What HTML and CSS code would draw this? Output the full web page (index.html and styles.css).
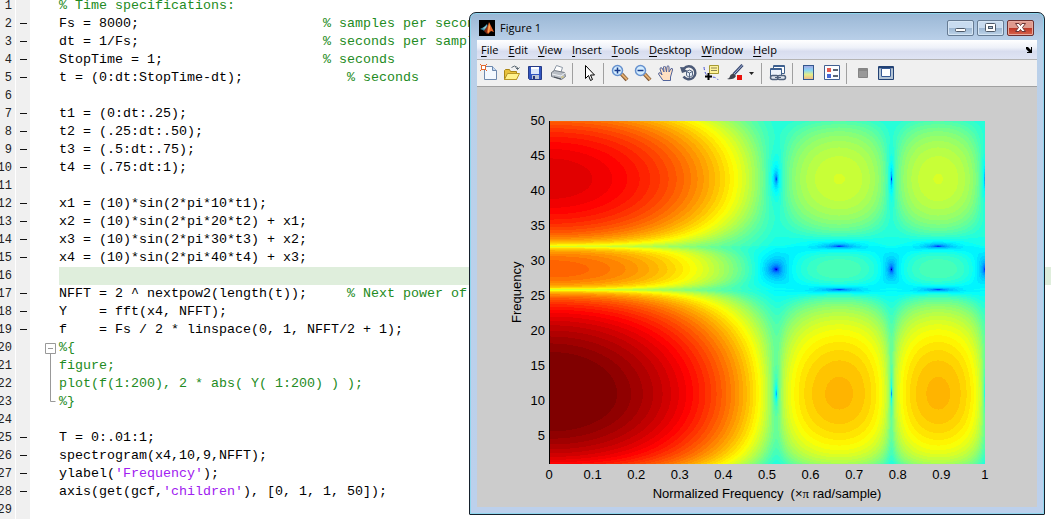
FILE: index.html
```html
<!DOCTYPE html>
<html lang="en">
<head>
<meta charset="utf-8">
<title>Figure 1</title>
<link rel="stylesheet" href="styles.css">
</head>
<body>
<main class="editor">
<div class="line"><span class="num">1</span><span class="mark"></span><span class="fold"></span><code class="comment">% Time specifications:</code></div>
<div class="line"><span class="num">2</span><span class="mark dash"></span><span class="fold"></span><code>Fs = 8000;                       <span class="comment">% samples per second</span></code></div>
<div class="line"><span class="num">3</span><span class="mark dash"></span><span class="fold"></span><code>dt = 1/Fs;                       <span class="comment">% seconds per sample</span></code></div>
<div class="line"><span class="num">4</span><span class="mark dash"></span><span class="fold"></span><code>StopTime = 1;                    <span class="comment">% seconds</span></code></div>
<div class="line"><span class="num">5</span><span class="mark dash"></span><span class="fold"></span><code>t = (0:dt:StopTime-dt);             <span class="comment">% seconds</span></code></div>
<div class="line"><span class="num">6</span><span class="mark"></span><span class="fold"></span><code></code></div>
<div class="line"><span class="num">7</span><span class="mark dash"></span><span class="fold"></span><code>t1 = (0:dt:.25);</code></div>
<div class="line"><span class="num">8</span><span class="mark dash"></span><span class="fold"></span><code>t2 = (.25:dt:.50);</code></div>
<div class="line"><span class="num">9</span><span class="mark dash"></span><span class="fold"></span><code>t3 = (.5:dt:.75);</code></div>
<div class="line"><span class="num">10</span><span class="mark dash"></span><span class="fold"></span><code>t4 = (.75:dt:1);</code></div>
<div class="line"><span class="num">11</span><span class="mark"></span><span class="fold"></span><code></code></div>
<div class="line"><span class="num">12</span><span class="mark dash"></span><span class="fold"></span><code>x1 = (10)*sin(2*pi*10*t1);</code></div>
<div class="line"><span class="num">13</span><span class="mark dash"></span><span class="fold"></span><code>x2 = (10)*sin(2*pi*20*t2) + x1;</code></div>
<div class="line"><span class="num">14</span><span class="mark dash"></span><span class="fold"></span><code>x3 = (10)*sin(2*pi*30*t3) + x2;</code></div>
<div class="line"><span class="num">15</span><span class="mark dash"></span><span class="fold"></span><code>x4 = (10)*sin(2*pi*40*t4) + x3;</code></div>
<div class="line"><span class="num">16</span><span class="mark"></span><span class="fold"></span><code class="current"></code></div>
<div class="line"><span class="num">17</span><span class="mark dash"></span><span class="fold"></span><code>NFFT = 2 ^ nextpow2(length(t));     <span class="comment">% Next power of 2</span></code></div>
<div class="line"><span class="num">18</span><span class="mark dash"></span><span class="fold"></span><code>Y    = fft(x4, NFFT);</code></div>
<div class="line"><span class="num">19</span><span class="mark dash"></span><span class="fold"></span><code>f    = Fs / 2 * linspace(0, 1, NFFT/2 + 1);</code></div>
<div class="line"><span class="num">20</span><span class="mark"></span><span class="fold"><svg width="29" height="18"><path d="M15.5 4.500h10v10h-10zM18 9.500h5M20.500 15v3" class="fold-stroke"/></svg></span><code class="comment">%{</code></div>
<div class="line"><span class="num">21</span><span class="mark"></span><span class="fold"><svg width="29" height="18"><path d="M20.500 0v18" class="fold-stroke"/></svg></span><code class="comment">figure;</code></div>
<div class="line"><span class="num">22</span><span class="mark"></span><span class="fold"><svg width="29" height="18"><path d="M20.500 0v18" class="fold-stroke"/></svg></span><code class="comment">plot(f(1:200), 2 * abs( Y( 1:200) ) );</code></div>
<div class="line"><span class="num">23</span><span class="mark"></span><span class="fold"><svg width="29" height="18"><path d="M20.500 0v8.500h5" class="fold-stroke"/></svg></span><code class="comment">%}</code></div>
<div class="line"><span class="num">24</span><span class="mark"></span><span class="fold"></span><code></code></div>
<div class="line"><span class="num">25</span><span class="mark dash"></span><span class="fold"></span><code>T = 0:.01:1;</code></div>
<div class="line"><span class="num">26</span><span class="mark dash"></span><span class="fold"></span><code>spectrogram(x4,10,9,NFFT);</code></div>
<div class="line"><span class="num">27</span><span class="mark dash"></span><span class="fold"></span><code>ylabel(<span class="string">'Frequency'</span>);</code></div>
<div class="line"><span class="num">28</span><span class="mark dash"></span><span class="fold"></span><code>axis(get(gcf,<span class="string">'children'</span>), [0, 1, 1, 50]);</code></div>
<div class="line"><span class="num">29</span><span class="mark"></span><span class="fold"></span><code></code></div>
</main>

<section class="window" aria-label="Figure 1">
<header class="titlebar">
<svg class="app-icon" width="16" height="16" viewBox="0 0 16 16"><path fill="#000" d="M0 0h16v16H0z"/><path fill="#3d8fae" d="M1 9l4-2 3-3 1 3-4 4-1-1z"/><path fill="#8fc7cf" d="M4 8l4-3-1 3-2 1z"/><path fill="#7d2a14" d="M5 11l4-6 1 7-2 2z"/><path fill="#e7662a" d="M10 2l2 4 3 6-3-1-3 3-1-2 1-6z"/><path fill="#ffb35a" d="M10 3l1 4-1 5-1 1z"/></svg>
<h1>Figure 1</h1>
<button class="caption" aria-label="Minimize"><svg width="25" height="14"><rect x="7.500" y="7.500" width="10" height="3" rx="1" fill="#fff" stroke="#4d5968"/></svg></button>
<button class="caption" aria-label="Maximize"><svg width="25" height="14"><rect x="7.500" y="2.500" width="10" height="8" rx="1" fill="#fff" stroke="#4d5968"/><rect x="10.500" y="5.500" width="4" height="2" fill="#a9bfd6" stroke="#4d5968"/></svg></button>
<button class="caption close" aria-label="Close"><svg width="25" height="14"><path d="M7.500 2.500h3.500l1.500 2 1.500-2h3.500l-3 4 3 4h-3.500l-1.500-2-1.500 2H7.500l3-4z" fill="#fff" stroke="#6b3434"/></svg></button>
</header>
<nav class="menubar">
<button><u>F</u>ile</button><button><u>E</u>dit</button><button><u>V</u>iew</button><button><u>I</u>nsert</button><button><u>T</u>ools</button><button><u>D</u>esktop</button><button><u>W</u>indow</button><button><u>H</u>elp</button>
<button class="dock" aria-label="Dock figure"><svg width="8" height="8"><path d="M1 1h2l3 3V1h1v6H2V6h2L1 3z" fill="#000"/></svg></button>
</nav>
<div class="toolbar">
<button aria-label="New figure"><svg width="18" height="18"><path d="M4.500 2.500h8l4 4v9h-12z" fill="#f4f9ff" stroke="#6d88ad"/><path d="M12.500 2.500v4h4" fill="#c5d9f2" stroke="#6d88ad"/><path d="M1.500 1.500h4v4h-4z" fill="#fff" stroke="#e2672c"/><path d="M0 0l2 2M7 0L5 2M0 7l2-2M7 7L5 5" stroke="#e2672c"/></svg></button>
<button aria-label="Open"><svg width="18" height="18"><path d="M1.500 15.500v-9l1-1h4l1 2h6v8z" fill="#e8c13b" stroke="#a98515"/><path d="M1.500 15.500l3-6h12l-3 6z" fill="#fff18b" stroke="#b79527"/><path d="M8.500 3.500q3-3 6 0v2M12.500 3.500l2 2 2-2" fill="none" stroke="#5d6a75"/></svg></button>
<button aria-label="Save"><svg width="18" height="18"><path d="M2.500 2.500h13v13h-12l-1-1z" fill="#3155c0" stroke="#263b86"/><path d="M5 3h8v7H5z" fill="#dce8fb"/><path d="M5 3h8v2H5z" fill="#fff"/><path d="M6 11h7v4H6z" fill="#bcc6d5"/><path d="M7 12h2v3H7z" fill="#26367a"/></svg></button>
<button aria-label="Print"><svg width="18" height="18"><path d="M4.500 7.500l3-6 6 2-2 6z" fill="#fff" stroke="#8b96a4"/><path d="M2.500 8.500l3-2 10 2 1 4-4 3-10-3z" fill="#b9bec5" stroke="#747b84"/><path d="M3 10l9 2 4-3" fill="none" stroke="#edf0f3"/><path d="M5 13l7 2" stroke="#454b53"/><path d="M12.500 13h2" stroke="#efd44f"/></svg></button>
<i class="sep"></i>
<button aria-label="Edit plot"><svg width="18" height="18"><path d="M5.500 1.500v13l3-3 2 5 2-1-2-4.500h4z" fill="#fff" stroke="#000"/></svg></button>
<i class="sep"></i>
<button aria-label="Zoom in"><svg width="18" height="18"><path d="M10.500 10l5.500 6" stroke="#805630" stroke-width="4"/><path d="M10.500 10l5.500 5.500" stroke="#e3ae70" stroke-width="2"/><circle cx="6.500" cy="6.500" r="5" fill="#d4edff" stroke="#6691ce" stroke-width="1.500"/><path d="M3.500 6.500h6M6.500 3.500v6" stroke="#173b8c" stroke-width="1.500"/></svg></button>
<button aria-label="Zoom out"><svg width="18" height="18"><path d="M10.500 10l5.500 6" stroke="#805630" stroke-width="4"/><path d="M10.500 10l5.500 5.500" stroke="#e3ae70" stroke-width="2"/><circle cx="6.500" cy="6.500" r="5" fill="#d4edff" stroke="#6691ce" stroke-width="1.500"/><path d="M3.500 6.500h6" stroke="#173b8c" stroke-width="1.500"/></svg></button>
<button aria-label="Pan"><svg width="18" height="18"><path d="M6 16.500L1.500 10q0-2 2-1L5 11 3 5q0-2 2-1l2 4-.5-5q1-2 2 0l1 5 .5-5.500q1-1.500 2 0V8l2-3.500q2-.5 1.500 1.500L13.500 13v3.500z" fill="#ffe0c2" stroke="#52649b"/></svg></button>
<button aria-label="Rotate 3D"><svg width="18" height="18"><path d="M4 4.500A6.500 6.500 0 1 1 3.500 12.500" fill="none" stroke="#4c5a77" stroke-width="2.500"/><path d="M0 3l2 6 6-2-3-1.500 1-2z" fill="#4c5a77"/><path d="M6.500 7.500l3-1.500 3 1.500v4l-3 2-3-2zM6.500 7.500l3 1.500 3-1.500M9.500 9v4.500" fill="#e5edf8" stroke="#566783"/></svg></button>
<button aria-label="Data cursor"><svg width="18" height="18"><path d="M1 3q1 10 7 10 6 0 7 3" fill="none" stroke="#4650d0" stroke-dasharray="3 2"/><path d="M6.500 1.500h9v8h-9z" fill="#fff29a" stroke="#a69a34"/><path d="M8 4h6M8 6.500h6" stroke="#8c8654"/><path d="M5.500 9v7M2 12.500h7" stroke="#000" stroke-width="2"/></svg></button>
<button aria-label="Brush"><svg width="18" height="18"><path d="M16.500 1L8 10" stroke="#35456d" stroke-width="3"/><path d="M16.500 1L8 10" stroke="#aebde0"/><path d="M1 15q3-1 3.500-4l3-2 2.500 3q-2 4-9 3z" fill="#424651"/><path d="M11 11h5v5h-5z" fill="#e9110b"/></svg></button>
<button class="arrow" aria-label="Brush options"><svg width="12" height="18"><path d="M3 8h5l-2.500 3z" fill="#222"/></svg></button>
<i class="sep"></i>
<button aria-label="Link plot"><svg width="18" height="18"><path d="M4.500 1.500h11v8h-11z" fill="#fff" stroke="#40618c"/><path d="M1.500 4.500h11v8h-11z" fill="#edf4fc" stroke="#40618c"/><path d="M2 5.500h10M5 2.500h10" stroke="#3d6195"/><rect x="1.500" y="11.500" width="8" height="4" rx="2" fill="#dfe6ef" stroke="#4f627c" stroke-width="1.500"/><rect x="8.500" y="11.500" width="8" height="4" rx="2" fill="#dfe6ef" stroke="#4f627c" stroke-width="1.500"/><path d="M6 13.500h6" stroke="#4f627c"/></svg></button>
<i class="sep"></i>
<button aria-label="Insert colorbar"><svg width="18" height="18"><defs><linearGradient id="bar" x1="0" y1="0" x2="0" y2="1"><stop stop-color="#a4a3e6"/><stop offset=".35" stop-color="#8ad8f3"/><stop offset=".65" stop-color="#e5ed87"/><stop offset="1" stop-color="#efb489"/></linearGradient></defs><rect x="3.500" y="1.500" width="10" height="14" fill="url(#bar)" stroke="#35588d"/></svg></button>
<button aria-label="Insert legend"><svg width="18" height="18"><path d="M1.500 1.500h15v14h-15z" fill="#fbfdff" stroke="#415f91"/><path d="M4 4h4v4H4z" fill="#e45b50"/><path d="M4 10h4v4H4z" fill="#4667d5"/><path d="M10 6h5M10 12h5" stroke="#26334a" stroke-width="1.500"/></svg></button>
<i class="sep"></i>
<button aria-label="Hide plot tools"><svg width="18" height="18"><path d="M4.500 4.500h9v9h-9z" fill="#999" stroke="#858585"/><path d="M5 6h8" stroke="#777"/></svg></button>
<button aria-label="Show plot tools"><svg width="18" height="18"><path d="M1.500 2.500h15v13h-15z" fill="#fff" stroke="#234274"/><path d="M2 3.500h14" stroke="#234274" stroke-width="2"/><path d="M2 5h2v8H2zM14 5h2v8h-2zM2 13h14v2H2z" fill="#b4c4d4"/><path d="M4.500 4.500h9v8h-9z" fill="#fff" stroke="#365a94"/></svg></button>
</div>
<div class="figure">
<div class="ylabel">Frequency</div>
<div class="yticks"><span>50</span><span>45</span><span>40</span><span>35</span><span>30</span><span>25</span><span>20</span><span>15</span><span>10</span><span>5</span></div>
<canvas class="plot" id="plot" width="435" height="343" role="img" aria-label="Spectrogram"></canvas>
<div class="xticks"><span>0</span><span>0.1</span><span>0.2</span><span>0.3</span><span>0.4</span><span>0.5</span><span>0.6</span><span>0.7</span><span>0.8</span><span>0.9</span><span>1</span></div>
<div class="xlabel">Normalized Frequency&nbsp; (×<span class="symbol">π</span> rad/sample)</div>
</div>
</section>
<script src="plot.js"></script>
</body>
</html>
```
FILE: styles.css
```css
* { box-sizing: border-box; }

body {
  margin: 0;
  min-height: 100vh;
  background: #fff;
  color: #000;
  position: relative;
  overflow: hidden;
}

button {
  margin: 0;
  padding: 0;
  border: 0;
  background: none;
  font: inherit;
  color: inherit;
}

svg { display: block; }

/* Code editor */
.editor {
  height: 100vh;
  overflow: hidden;
  font: 10pt/18px "Liberation Mono", monospace;
}

.line {
  display: grid;
  grid-template-columns: 16px 14px 29px 1fr;
  height: 18px;
}

.line:first-child { margin-top: -3px; }

.num {
  display: flex;
  justify-content: flex-end;
  padding-right: 3px;
  background: #f0f0f0;
  border-right: 1px solid #fff;
  font-size: 12px;
  color: #222;
}

.mark {
  display: flex;
  align-items: center;
  justify-content: center;
  padding-bottom: 2px;
  background: #f0f0f0;
}

.dash::before {
  content: "";
  width: 7px;
  height: 1px;
  background: #111;
}

.line code {
  font: inherit;
  white-space: pre;
}

.comment { color: #228b22; }
.string { color: #a020f0; }
.current { background: #dfeedc; }
.fold-stroke { fill: none; stroke: #999; }

/* Figure window */
.window {
  position: absolute;
  top: 12px;
  right: 6px;
  left: 469px;
  display: flex;
  flex-direction: column;
  padding: 0 7px 7px;
  border: 1px solid #16202c;
  border-radius: 7px 7px 1px 1px;
  background: linear-gradient(#9ab7d5, #bad0e9 28px, #bcd0ec);
  box-shadow: inset 0 0 0 1px #8fd6ee;
  font: 11px/18px "Open Sans", sans-serif;
}

.titlebar {
  display: flex;
  align-items: center;
  height: 27px;
  padding: 3px 3px 0 2px;
  gap: 3px;
}

.titlebar h1 {
  flex: 1;
  margin: 0;
  padding-left: 2px;
  font-size: 11px;
  font-weight: 400;
}

.caption {
  width: 27px;
  height: 16px;
  border: 1px solid #667b93;
  border-radius: 2px;
  background: linear-gradient(#c8dbef 50%, #9bb6d2 50%, #bdd3e8);
  box-shadow: inset 0 0 0 1px #d5e5f4;
}

.close {
  border-color: #6d3030;
  background: linear-gradient(#df9a8e 50%, #bd3525 50%, #d8654d);
  box-shadow: inset 0 0 0 1px #e7aa9f;
}

.menubar {
  display: flex;
  align-items: center;
  gap: 10px;
  height: 20px;
  padding: 0 4px;
  background: linear-gradient(#fff, #eef1f9 40%, #d8ddef 60%, #dfe4f4);
  border-bottom: 1px solid #b4b4b4;
}

.menubar u { text-underline-offset: 2px; }
.dock { margin-left: auto; }

.toolbar {
  display: flex;
  align-items: center;
  height: 27px;
  background: #f0f0f0;
  border-bottom: 1px solid #a0a0a0;
}

.toolbar button {
  display: flex;
  justify-content: center;
  width: 23px;
}

.toolbar .arrow { width: 12px; }

.sep {
  width: 1px;
  height: 21px;
  margin: 0 4px 0 3px;
  background: #a0a0a0;
}

.figure {
  display: grid;
  grid-template-columns: 48px 24px 1fr;
  grid-template-rows: auto 22px auto;
  padding: 34px 52px 5px 0;
  background: #ccc;
  font: 13px/16px "Liberation Sans", sans-serif;
}

.ylabel {
  writing-mode: vertical-rl;
  transform: rotate(180deg);
  justify-self: end;
  text-align: center;
}

.yticks {
  display: flex;
  flex-direction: column;
  justify-content: space-between;
  align-items: flex-end;
  margin-top: -8px;
  padding: 0 4px 20px 0;
}

.plot {
  display: block;
  width: 100%;
  border-left: 1px solid #000;
}

.xticks {
  grid-column: 3;
  display: flex;
  justify-content: space-between;
  align-items: center;
}

.xticks span {
  display: flex;
  justify-content: center;
  width: 0;
}

.xlabel {
  grid-column: 3;
  text-align: center;
}

.symbol { font-family: "Liberation Serif", serif; }
```
FILE: plot.js
```js
// Spectrogram surface: window side lobes along x, tone lobes along y.
const canvas = document.getElementById('plot');
const ctx = canvas.getContext('2d');
const DECADE = 0.155;
const TINY = 1e-6;

const log = v => DECADE * Math.log10(Math.max(Math.abs(v), TINY));

function across(x) {
  if (x < 0.52) {
    const u = x / 0.52;
    return { main: -1.15 * x * x + log(1 - u * u), fill: -0.78 * x * x };
  }
  const t = x < 0.785 ? Math.pow((x - 0.52) / 0.265, 1.15) : (x - 0.785) / 0.215;
  return {
    main: -0.325 + log(Math.sin(Math.PI * t)),
    fill: -0.21 + log(Math.cos(Math.PI * t))
  };
}

function along(y) {
  let peak, centre, half, bend, base, lift, floor;
  if (y < 25.9) {
    [peak, centre, bend, base, lift, floor] = [1.018, 11, 0.0006, 0.58, 0.2, 0.28];
    half = y < centre ? 11.5 : 14.9;
  } else if (y < 32.1) {
    [peak, centre, bend, base, lift, floor] = [0.777, 28.8, 0, 0.59, 0, 0.03];
    half = y < centre ? 2.9 : 3.3;
  } else {
    [peak, centre, bend, base, lift, floor] = [0.904, 41.7, 0.0009, 0.6, 0.1, 0.12];
    half = y < centre ? 9.6 : 10.5;
  }
  const d = y - centre;
  const u = d / half;
  return {
    main: peak - bend * d * d + log(1 - u * u),
    fill: base + lift * (1 - u * u) + log(u),
    floor
  };
}

function jet(v) {
  const q = Math.min(63, Math.max(0, Math.floor(v * 64))) / 63;
  return [3, 2, 1].map(k => 255 * Math.min(1, Math.max(0, 1.5 - Math.abs(4 * q - k))));
}

const w = canvas.width;
const h = canvas.height;
const image = ctx.createImageData(w, h);
for (let j = 0; j < h; j++) {
  const row = along(50 - (j + 0.5) / h * 49);
  for (let i = 0; i < w; i++) {
    const col = across((i + 0.5) / w);
    const a = Math.pow(10, (row.main + col.main) / DECADE);
    const b = Math.pow(10, (row.fill + col.fill) / DECADE);
    const v = Math.max(row.floor, DECADE * Math.log10(Math.hypot(a, b)));
    const p = (j * w + i) * 4;
    image.data.set([...jet(v), 255], p);
  }
}
ctx.putImageData(image, 0, 0);
```
